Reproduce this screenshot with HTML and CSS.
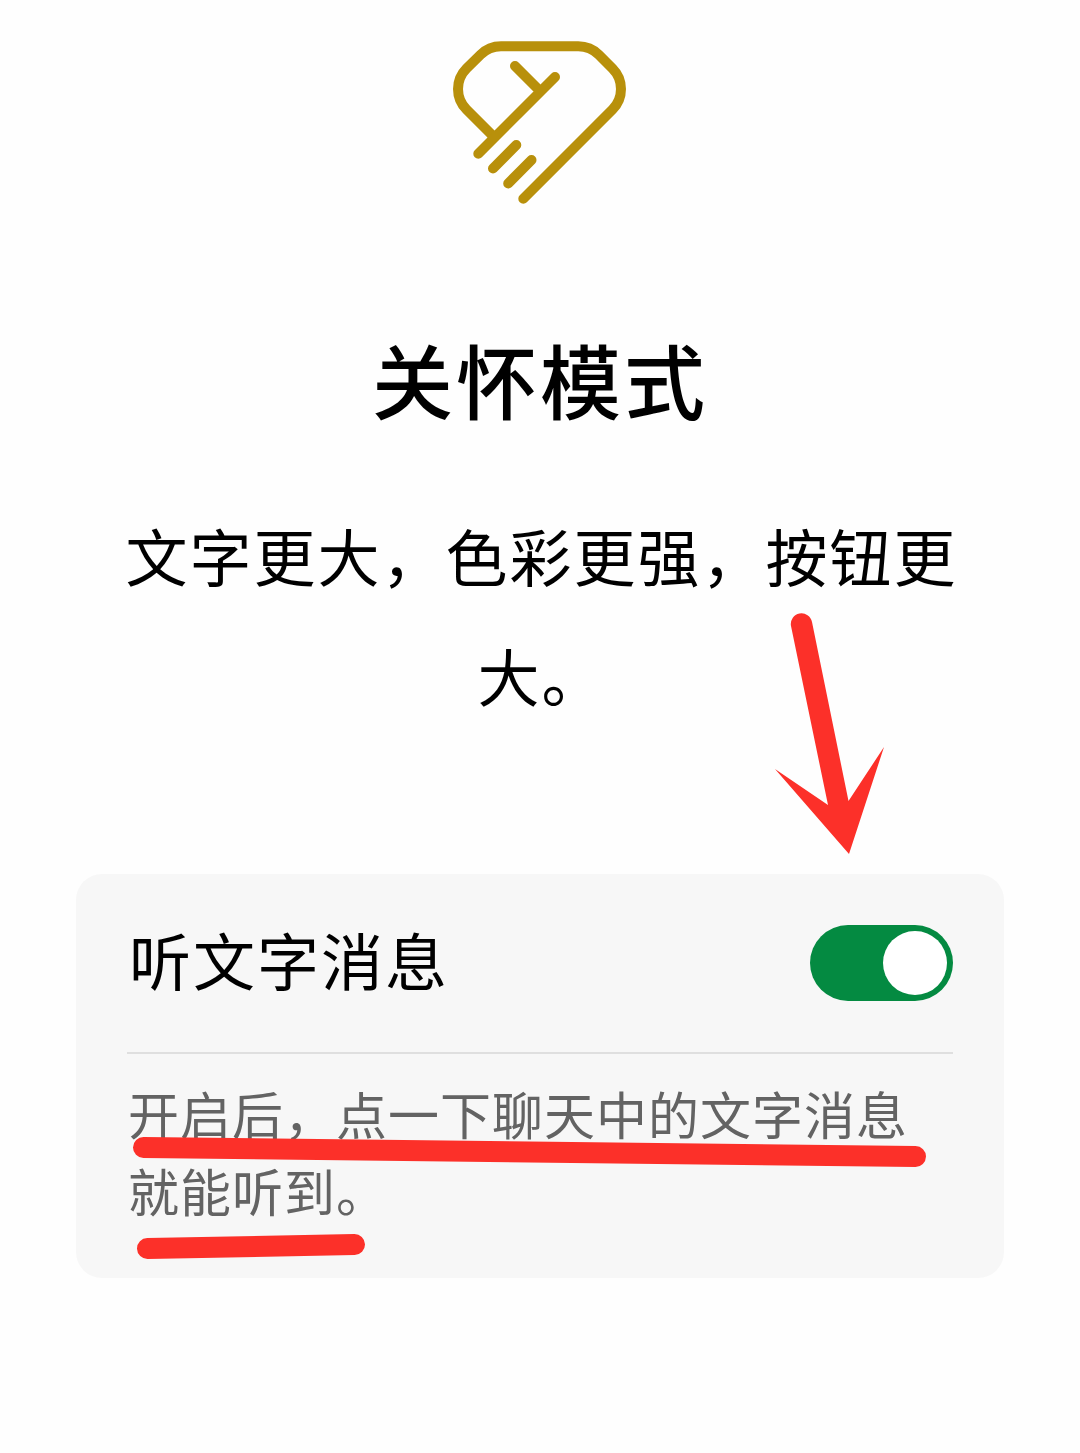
FILE: index.html
```html
<!DOCTYPE html>
<html lang="zh-CN">
<head>
  <meta charset="UTF-8">
  <title>关怀模式</title>
  <link rel="stylesheet" href="styles.css">
</head>
<body>

  <main class="page">
    <svg class="logo" viewBox="0 0 220 200" aria-hidden="true">
      <path d="M64 117 L36.5 89.5 A29 29 0 0 1 36.5 48.5 L50.5 34.8 A29 29 0 0 1 71 26.3 H148.3 A29 29 0 0 1 168.8 34.8 L182.5 48.5 A29 29 0 0 1 182.5 89.5 L93.3 178.7" />
      <path d="M125 57 L48.3 133.7 M85 46 L109 70 M86.3 125 L63 148.5 M101.5 140 L78.2 163.5" />
    </svg>

    <h1>关怀模式</h1>
    <p class="intro">文字更大，色彩更强，按钮更大。</p>

    <section class="card">
      <div class="setting">
        <h2>听文字消息</h2>
        <span class="switch"></span>
      </div>
      <p class="hint">开启后，点一下聊天中的文字消息就能听到。</p>
    </section>

    <svg class="marks" viewBox="0 0 1080 1453" aria-hidden="true">
      <path class="arrow" d="M791 626 A10.5 10.5 0 0 1 812 622 L848.5 801 L884 747 L849 854 L775 769 L828 805 Z" />
      <path class="line" d="M143.5 1147.5 L915.5 1156.5" />
      <path class="line" d="M147.5 1248.5 L354.5 1244.5" />
    </svg>
  </main>

</body>
</html>
```
FILE: styles.css
```css
body {
  margin: 0;
  background-color: #fefefe;
  color: #000;
  font-family: "Noto Sans CJK SC", sans-serif;
}

.page {
  position: relative;
  box-sizing: border-box;
  height: 1453px;
  padding: 20px 76px 0;
  overflow: hidden;
}

.logo {
  display: block;
  width: 220px;
  height: 200px;
  margin: 0 auto;
  fill: none;
  stroke: #b8900b;
  stroke-width: 10;
  stroke-linecap: round;
}

h1 {
  margin: 98px 0 0;
  font-size: 81px;
  font-weight: 500;
  letter-spacing: 3px;
  line-height: 120px;
  text-align: center;
}

.intro {
  margin: 57px 44px 0 47px;
  font-size: 62px;
  letter-spacing: 2px;
  line-height: 120px;
  text-align: center;
}

.card {
  box-sizing: border-box;
  height: 404px;
  margin-top: 139px;
  padding: 0 51px;
  border-radius: 26px;
  background-color: #f7f7f7;
}

.setting {
  display: flex;
  align-items: center;
  justify-content: space-between;
  height: 178px;
  border-bottom: 2px solid #dfdfdf;
}

h2 {
  margin: 0;
  padding: 0 0 8px 2px;
  font-size: 62px;
  font-weight: 400;
  letter-spacing: 2px;
}

.switch {
  display: flex;
  justify-content: flex-end;
  box-sizing: border-box;
  width: 143px;
  height: 76px;
  padding: 6px;
  border-radius: 38px;
  background-color: #048a41;
}

.switch::after {
  content: "";
  width: 64px;
  height: 64px;
  border-radius: 50%;
  background-color: #fff;
}

.hint {
  margin: 21px 0 0 1px;
  color: #636363;
  font-size: 51px;
  letter-spacing: 1px;
  line-height: 77px;
}

.marks {
  position: absolute;
  top: 0;
  left: 0;
  width: 1080px;
  height: 1453px;
}

.arrow {
  fill: #fc3029;
}

.line {
  stroke: #fc3029;
  stroke-width: 21;
  stroke-linecap: round;
}
```
